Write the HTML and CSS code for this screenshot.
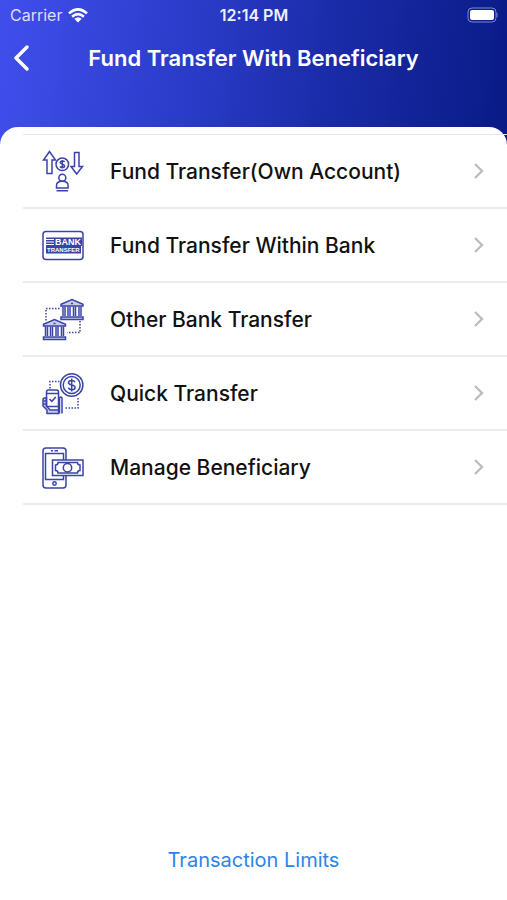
FILE: index.html
```html
<!DOCTYPE html>
<html lang="en">
<head>
<meta charset="utf-8">
<meta name="viewport" content="width=device-width, initial-scale=1">
<title>Fund Transfer With Beneficiary</title>
<link rel="stylesheet" href="styles.css">
</head>
<body>
<div class="screen">
  <header class="header">
    <div class="status">
      <div class="carrier">
        <span>Carrier</span>
        <svg class="wifi" viewBox="0 0 20 15" aria-hidden="true">
          <path d="M1 5.4Q10-2.6 19 5.4M4.1 8.7Q10 3.6 15.900 8.700" fill="none" stroke="#fff" stroke-width="2.600"/>
          <path d="M6.300 10.700Q10 7.700 13.700 10.700L10 14.500Z" fill="#fff"/>
        </svg>
      </div>
      <span class="time">12:14 PM</span>
      <svg class="battery" viewBox="0 0 31 16" aria-hidden="true">
        <rect x="1" y="1" width="28" height="14" rx="4" fill="none" stroke="#7d88cc"/>
        <rect x="3" y="3" width="24" height="10" rx="2" fill="#fff"/>
        <path d="M30 6v4" stroke="#7d88cc"/>
      </svg>
    </div>
    <div class="navbar">
      <button class="back" type="button" aria-label="Back">
        <svg viewBox="0 0 16 26" aria-hidden="true"><path d="M14 2 3 13l11 11" fill="none" stroke="#fff" stroke-width="3.400" stroke-linecap="round" stroke-linejoin="round"/></svg>
      </button>
      <h1 class="title">Fund Transfer With Beneficiary</h1>
    </div>
  </header>
  <main class="panel">
    <nav class="menu">
      <a class="row" href="#own">
        <svg class="icon" viewBox="0 0 44 44" aria-hidden="true">
          <path d="M8.500 2.500 2.500 11H6v13.500h5V11h3.500zM33.500 3.500h4.500v14h3.500L35.700 25 30 17.500h3.500z"/>
          <circle cx="21.300" cy="15.300" r="6.300"/>
          <path d="M23.500 13c-.6-1.300-4.300-1.400-4.300.6 0 2 4.400 1.300 4.400 3.400 0 2-3.900 1.900-4.600.4M21.300 11v8.600"/>
          <circle cx="21.300" cy="28.700" r="3.500"/>
          <path d="M15.500 39v-2.500q0-4.300 5.800-4.300t5.800 4.300V39zM15.500 41.800h11.600"/>
        </svg>
        <span class="label">Fund Transfer(Own Account)</span>
        <svg class="chevron" viewBox="0 0 12 18" aria-hidden="true"><path d="m2 2 7 7-7 7"/></svg>
      </a>
      <a class="row" href="#within">
        <svg class="icon" viewBox="0 0 44 44" aria-hidden="true">
          <rect x="2" y="8.500" width="40" height="28" rx="3"/>
          <path class="solid" d="M5 14.500h36v8.500h-1V30.500H5z"/>
          <path class="light" d="M5 16.500h8M5 19h8M5 21.500h8"/>
          <text class="art bank" x="14" y="22">BANK</text>
          <text class="art transfer" x="6" y="29">TRANSFER</text>
        </svg>
        <span class="label">Fund Transfer Within Bank</span>
        <svg class="chevron" viewBox="0 0 12 18" aria-hidden="true"><path d="m2 2 7 7-7 7"/></svg>
      </a>
      <a class="row" href="#other">
        <svg class="icon" viewBox="0 0 44 44" aria-hidden="true">
          <g id="bank-building">
            <path class="tint" d="M20 9v-1.800l11-4.700 11 4.700V9zM20 20h22v2.500H20z"/>
            <path d="M22 9.500V19M24 9.500V19M27 9.500V19M29 9.500V19M32.500 9.500V19M34.500 9.500V19M38 9.500V19M40 9.500V19M30 6.500h2"/>
          </g>
          <use href="#bank-building" x="-17.500" y="20"/>
          <path class="dots" d="M18.500 11.500H5V25M39 24v11.500H26"/>
        </svg>
        <span class="label">Other Bank Transfer</span>
        <svg class="chevron" viewBox="0 0 12 18" aria-hidden="true"><path d="m2 2 7 7-7 7"/></svg>
      </a>
      <a class="row" href="#quick">
        <svg class="icon" viewBox="0 0 44 44" aria-hidden="true">
          <circle cx="30.700" cy="14" r="11.200"/>
          <circle cx="30.700" cy="14" r="8.500"/>
          <path d="M33.800 11.300c-.8-2.500-6.300-2.300-6.300.4 0 3 6.600 1.600 6.600 4.700 0 3-6 2.900-6.700.2M30.700 7.500v13"/>
          <path class="dots" d="M18.500 10.500H9V18M37 27v10H23"/>
          <path class="tint" d="M5.500 27H3.500q-1.500 0-1.500 1.500v6.500l4 4v3.500h11.500V39H9l-3.500-4z"/>
          <path d="M5.500 36V21q0-2 2-2h8q2 0 2 2v15M5.500 22.500h12M5.500 35.500h12M8.500 28l2.300 2.300 4-4.300M2.500 30h3M2.500 33h3"/>
          <path d="M18.500 42.500V27q1.300-2 2.500 0v15.500M17.500 36v3"/>
        </svg>
        <span class="label">Quick Transfer</span>
        <svg class="chevron" viewBox="0 0 12 18" aria-hidden="true"><path d="m2 2 7 7-7 7"/></svg>
      </a>
      <a class="row" href="#manage">
        <svg class="icon" viewBox="0 0 44 44" aria-hidden="true">
          <path d="M25 15V6q0-3-3-3H5Q2 3 2 6v34q0 3 3 3h17q3 0 3-3V30.500"/>
          <path d="M22.500 15V8.500h-18v26h18v-4M10 5.800h2M13.500 5.800H17"/>
          <circle cx="13.500" cy="38.500" r="1.700"/>
          <rect class="paper" x="11.500" y="15" width="30.500" height="15.500"/>
          <path d="M17 17.500h19.500q0 2.500 2.500 2.500v5.500q-2.500 0-2.500 2.500H17q0-2.500-2.500-2.500V20q2.500 0 2.500-2.500z"/>
          <circle cx="26.500" cy="22.800" r="4.200"/>
        </svg>
        <span class="label">Manage Beneficiary</span>
        <svg class="chevron" viewBox="0 0 12 18" aria-hidden="true"><path d="m2 2 7 7-7 7"/></svg>
      </a>
    </nav>
    <a class="limits" href="#limits">Transaction Limits</a>
  </main>
</div>
</body>
</html>
```
FILE: styles.css
```css
* { box-sizing: border-box; }

body {
  margin: 0;
  font-family: Inter, "Liberation Sans", sans-serif;
}

.screen {
  display: flex;
  flex-direction: column;
  min-height: 100vh;
  background: linear-gradient(97deg, #404fec 0, #2a3bc8 38%, #1a2ba8 65%, #091a86 100%) top / 100% 160px no-repeat;
}

.header { padding-bottom: 48px; color: #fff; }

.status {
  display: grid;
  grid-template-columns: 1fr auto 1fr;
  align-items: center;
  height: 30px;
  padding: 0 9px 0 10px;
  font-size: 16px;
}

.carrier {
  display: flex;
  align-items: center;
  gap: 6px;
  color: #dcdffa;
}

.wifi { width: 20px; height: 15px; }
.time { font-weight: 600; color: #eef0ff; }
.battery { width: 31px; height: 16px; justify-self: end; }

.navbar {
  display: grid;
  grid-template-columns: 36px 1fr 36px;
  align-items: center;
  height: 56px;
}

.back {
  display: flex;
  margin: 0;
  padding: 0 0 0 13px;
  border: 0;
  background: none;
}

.back svg { width: 16px; height: 26px; }

.title {
  margin: 0;
  font-size: 22px;
  font-weight: 600;
  line-height: 28px;
  text-align: center;
  white-space: nowrap;
}

.panel {
  display: flex;
  flex: 1;
  flex-direction: column;
  padding: 7px 0 24px;
  margin-top: -7px;
  border-radius: 18px 18px 0 0;
  background: #fff;
}

.menu {
  margin-left: 23px;
  border-top: 1px solid #e6e6e6;
}

.row {
  display: flex;
  align-items: center;
  height: 74px;
  padding: 0 22px 0 18px;
  border-bottom: 2px solid #ebebeb;
  color: #111;
  text-decoration: none;
}

.icon {
  flex: none;
  width: 44px;
  height: 44px;
  fill: none;
  stroke: #3a44a6;
  stroke-width: 1.5px;
}

.tint { fill: #c9cdec; }
.paper { fill: #fff; }
.solid { fill: #3a44a6; stroke: none; }
.light { stroke: #fff; stroke-width: 1px; }
.dots { stroke-dasharray: 1.5px 1.5px; }

.art {
  fill: #fff;
  stroke: none;
  font-family: "Liberation Sans", sans-serif;
  font-weight: 700;
}

.bank { font-size: 9px; }
.transfer { font-size: 6px; }

.label {
  flex: 1;
  margin-left: 25px;
  padding-top: 2px;
  font-size: 21px;
  font-weight: 500;
  line-height: 28px;
}

.chevron {
  width: 12px;
  height: 18px;
  fill: none;
  stroke: #bdbdc0;
  stroke-width: 2.4px;
}

.limits {
  align-self: center;
  margin-top: auto;
  color: #2b84ea;
  font-size: 20px;
  line-height: 32px;
  text-decoration: none;
}
```
